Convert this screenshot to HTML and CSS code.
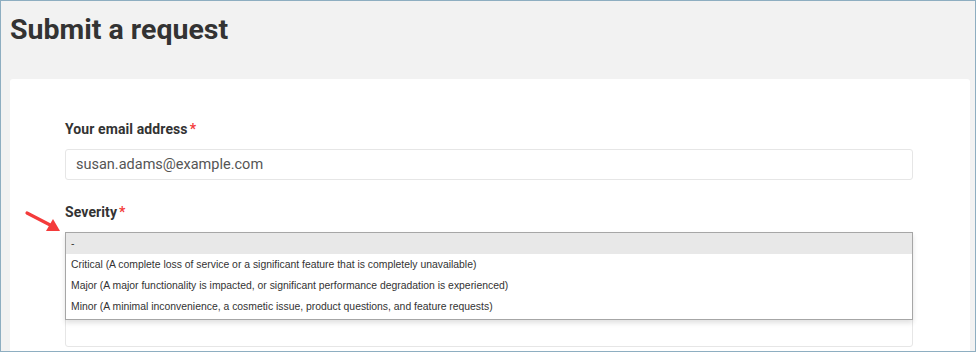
FILE: index.html
```html
<!DOCTYPE html>
<html lang="en">
<head>
    <meta charset="UTF-8">
    <meta name="viewport" content="width=device-width, initial-scale=1.0">
    <title>Submit a request</title>
    <link rel="stylesheet" href="styles.css">
</head>
<body>

<div class="frame">
    <h1>Submit a request</h1>

    <div class="card">
        <svg class="arrow" width="40" height="26" viewBox="0 0 40 26">
            <line x1="3" y1="3" x2="30" y2="17" stroke="#f43b3b" stroke-width="3.2" stroke-linecap="round"/>
            <polygon points="36,21 22,21 29,9" fill="#f43b3b"/>
        </svg>

        <div class="field">
            <label class="label">Your email address<span class="req">*</span></label>
            <div class="input">susan.adams@example.com</div>
        </div>

        <div class="field">
            <label class="label">Severity<span class="req">*</span></label>
            <div class="select-box">
                <ul class="dropdown">
                    <li class="option selected">-</li>
                    <li class="option">Critical (A complete loss of service or a significant feature that is completely unavailable)</li>
                    <li class="option">Major (A major functionality is impacted, or significant performance degradation is experienced)</li>
                    <li class="option">Minor (A minimal inconvenience, a cosmetic issue, product questions, and feature requests)</li>
                </ul>
            </div>
        </div>
    </div>
</div>

</body>
</html>
```

FILE: styles.css
```css
body {
    margin: 0;
    font-family: Roboto, 'Liberation Sans', sans-serif;
    color: #333;
}
.frame {
    height: 352px;
    box-sizing: border-box;
    border: 1px solid #8eaec1;
    background-color: #f2f2f2;
    padding: 0 5px 0 9px;
    overflow: hidden;
}
h1 {
    margin: 11px 0 31px;
    font-size: 28.5px;
    line-height: 36px;
    font-weight: 700;
    color: #333;
}
.card {
    position: relative;
    background-color: #fff;
    border-radius: 3px;
    padding: 40px 57px 0 55px;
    height: 400px;
}
.arrow {
    position: absolute;
    left: 14px;
    top: 131px;
}
.field {
    margin-bottom: 22px;
}
.label {
    display: block;
    font-size: 14px;
    line-height: 20px;
    font-weight: 700;
    letter-spacing: 0.1px;
    color: #333;
    margin-bottom: 10px;
}
.req {
    color: #f43b3b;
    margin-left: 2px;
}
.input {
    height: 31px;
    box-sizing: border-box;
    border: 1px solid #e6e6e6;
    border-radius: 3px;
    padding: 0 10px;
    font-size: 14.5px;
    line-height: 29px;
    color: #555;
}
.select-box {
    position: relative;
    height: 114px;
    box-sizing: border-box;
    border: 1px solid #e6e6e6;
    border-radius: 3px;
    margin-top: 11px;
}
.dropdown {
    position: absolute;
    left: -1px;
    right: -1px;
    top: -2px;
    margin: 0;
    padding: 0 0 2px;
    list-style: none;
    background-color: #fff;
    border: 1px solid #a6a6a6;
    box-shadow: 0 3px 5px rgba(0, 0, 0, 0.12);
    font-family: 'Liberation Sans', Arial, sans-serif;
    font-size: 10.4px;
}
.option {
    height: 21px;
    line-height: 21px;
    padding: 0 5px;
    color: #333;
    white-space: nowrap;
}
.option.selected {
    background-color: #e8e8e8;
}
```
